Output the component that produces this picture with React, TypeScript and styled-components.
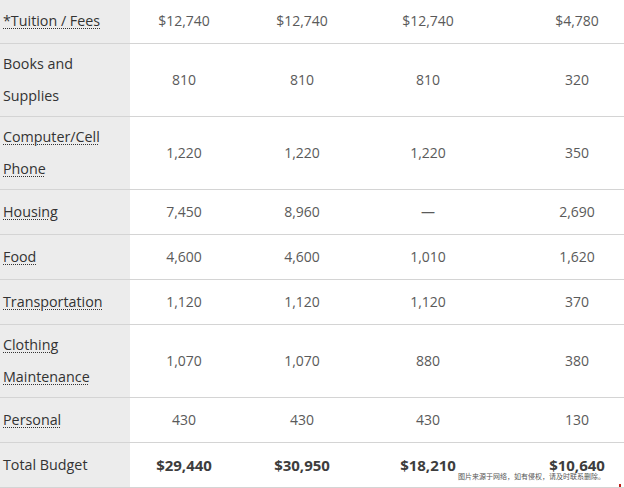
import * as React from 'react';
import styled, { createGlobalStyle } from 'styled-components';

const GlobalStyle = createGlobalStyle`
  html, body {
    margin: 0;
    padding: 0;
    background: #ffffff;
    overflow: hidden;
  }
  body {
    font-family: "Open Sans", "Noto Sans", sans-serif;
    color: #333333;
  }
`;

const Page = styled.div`
  position: relative;
  width: 624px;
  height: 488px;
  overflow: hidden;
`;

const Table = styled.table`
  border-collapse: collapse;
  table-layout: fixed;
  width: 664px;
  margin-top: -1px;
`;

const Row = styled.tr`
  border-bottom: 1px solid #d4d4d4;
`;

const Label = styled.th`
  width: 130px;
  box-sizing: border-box;
  background: #ececec;
  text-align: left;
  vertical-align: middle;
  font-weight: 400;
  font-size: 14.3px;
  line-height: 32px;
  padding: 4px 4px 4px 3px;
  color: #333333;
`;

const Term = styled.abbr`
  text-decoration: underline dotted #333333;
  text-underline-offset: 2px;
  text-decoration-thickness: 1px;
  cursor: help;
`;

const Cell = styled.td<{ $bold?: boolean }>`
  text-align: center;
  vertical-align: middle;
  font-size: ${(p) => (p.$bold ? '15px' : '14px')};
  line-height: 24px;
  padding: 10px 0;
  font-weight: ${(p) => (p.$bold ? 700 : 400)};
  color: ${(p) => (p.$bold ? '#3d3d3d' : '#5a5a5a')};
`;

const Watermark = styled.div`
  position: absolute;
  right: 19px;
  bottom: 7px;
  font-family: "Noto Sans CJK SC", sans-serif;
  font-size: 7px;
  line-height: 9px;
  color: #555555;
`;

const Corner = styled.div`
  position: absolute;
  right: 3px;
  bottom: 1px;
  width: 2px;
  height: 3px;
  background: #c0201a;
`;

type Item = { label: string; term?: boolean; values: string[] };

const items: Item[] = [
  { label: '*Tuition / Fees', term: true, values: ['$12,740', '$12,740', '$12,740', '$4,780'] },
  { label: 'Books and Supplies', values: ['810', '810', '810', '320'] },
  { label: 'Computer/Cell Phone', term: true, values: ['1,220', '1,220', '1,220', '350'] },
  { label: 'Housing', term: true, values: ['7,450', '8,960', '—', '2,690'] },
  { label: 'Food', term: true, values: ['4,600', '4,600', '1,010', '1,620'] },
  { label: 'Transportation', term: true, values: ['1,120', '1,120', '1,120', '370'] },
  { label: 'Clothing Maintenance', term: true, values: ['1,070', '1,070', '880', '380'] },
  { label: 'Personal', term: true, values: ['430', '430', '430', '130'] },
];

const totals = ['$29,440', '$30,950', '$18,210', '$10,640'];
const widths = [130, 108, 128, 124, 174];

export default function App() {
  return (
    <Page>
      <GlobalStyle />
      <Table>
        <colgroup>
          {widths.map((w, i) => (
            <col key={i} style={{ width: w }} />
          ))}
        </colgroup>
        <tbody>
          {items.map((item) => (
            <Row key={item.label}>
              <Label scope="row">
                {item.term ? <Term title={item.label}>{item.label}</Term> : item.label}
              </Label>
              {item.values.map((v, i) => (
                <Cell key={i}>{v}</Cell>
              ))}
            </Row>
          ))}
          <Row>
            <Label scope="row">Total Budget</Label>
            {totals.map((v, i) => (
              <Cell key={i} $bold>
                {v}
              </Cell>
            ))}
          </Row>
        </tbody>
      </Table>
      <Watermark>图片来源于网络，如有侵权，请及时联系删除。</Watermark>
      <Corner />
    </Page>
  );
}
